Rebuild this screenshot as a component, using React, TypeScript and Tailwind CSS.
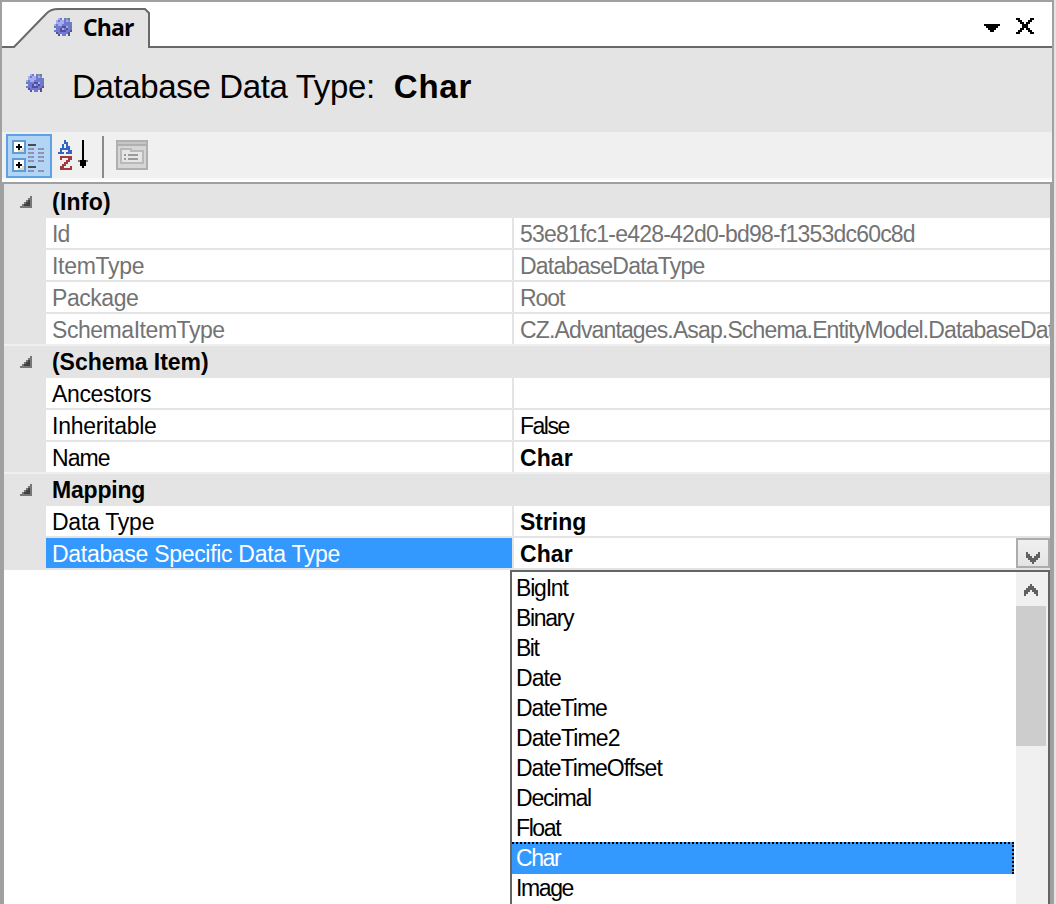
const gearRows = [
  '..ab.bgt.',
  '.abaabag.',
  '.aaaabbbb',
  'abaabbbbb',
  'tbbbddabt',
  '.bbdabdbb',
  'bbbdddbbd',
  '.dbbbbbd.',
  '..d.bb.d.',
];

const gearColors: Record<string, string> = {
  a: '#a3aeea',
  b: '#7377d2',
  g: '#8d919f',
  d: '#4f5099',
  t: '#3f9297',
};

function Gear() {
  return (
    <svg width="18" height="18" viewBox="0 0 9 9" shapeRendering="crispEdges" className="block shrink-0">
      {gearRows.flatMap((row, y) =>
        row.split('').map((c, x) =>
          c === '.' ? null : <rect key={`${x}-${y}`} x={x} y={y} width="1" height="1" fill={gearColors[c]} />,
        ),
      )}
    </svg>
  );
}

function TabStrip() {
  return (
    <div className="relative flex h-[46px] shrink-0 items-start bg-white">
      <svg width="1050" height="46" viewBox="2 2 1050 46" className="absolute left-0 top-0">
        <path d="M2 47H14L47 14Q51 9 58 9H145L149 13V47H1052V48H2Z" fill="#e4e4e4" />
        <path d="M2 47H14L47 13Q51 9 58 9H145L149 13V47H1052" fill="none" stroke="#696969" strokeWidth="2" />
      </svg>
      <div className="relative flex h-[46px] w-full items-start pl-[52px]">
        <div className="pt-4"><Gear /></div>
        <span className="ml-[11px] mt-[9px] font-['Open_Sans',sans-serif] text-[23px] font-bold leading-[32px] tracking-[-0.9px] text-black">Char</span>
        <svg width="60" height="24" viewBox="0 0 30 12" shapeRendering="crispEdges" className="ml-auto mr-[10px] mt-3">
          <path d="M1 5h8v1H8v1H7v1H6v1H4V8H3V7H2V6H1z" />
          <path d="M17 2h2v1h-2zM24 2h2v1h-2zM18 3h2v1h-2zM23 3h2v1h-2zM19 4h2v1h-2zM22 4h2v1h-2zM20 5h3v2h-3zM19 7h2v1h-2zM22 7h2v1h-2zM18 8h2v1h-2zM23 8h2v1h-2zM17 9h2v1h-2zM24 9h2v1h-2z" />
        </svg>
      </div>
    </div>
  );
}

function CategorizedIcon() {
  return (
    <svg width="32" height="32" viewBox="0 0 16 16" shapeRendering="crispEdges">
      {[0, 9].map((y) => (
        <g key={y} transform={`translate(0 ${y})`}>
          <path d="M0 0h7v7H0z" fill="#5e9bd8" />
          <path d="M1 1h5v5H1z" fill="#fff" />
          <path d="M5 4h1v2H3V5h2z" fill="#ded9bd" />
          <path d="M2 3h3v1H2zM3 2h1v3H3z" fill="#000" />
        </g>
      ))}
      <path d="M8 2h4v1H8zM8 13h4v1H8z" fill="#444d55" />
      <path d="M8 4h1v1H8zM8 6h1v1H8zM8 8h1v1H8zM8 10h1v1H8zM8 15h1v1H8zM13 4h1v1h-1zM13 6h1v1h-1zM13 8h1v1h-1zM13 10h1v1h-1zM13 15h1v1h-1zM10 4h1v1h-1zM10 6h1v1h-1zM10 8h1v1h-1zM10 10h1v1h-1zM10 15h1v1h-1zM15 4h1v1h-1zM15 6h1v1h-1zM15 8h1v1h-1zM15 10h1v1h-1zM15 15h1v1h-1z" fill="#9488bd" />
      <path d="M9 4h1v1H9zM9 6h1v1H9zM9 8h1v1H9zM9 10h1v1H9zM9 15h1v1H9zM14 4h1v1h-1zM14 6h1v1h-1zM14 8h1v1h-1zM14 10h1v1h-1zM14 15h1v1h-1z" fill="#7fa3ab" />
    </svg>
  );
}

function Toolbar() {
  return (
    <div className="flex h-[50px] shrink-0 items-start border-b-2 border-white bg-[#f0f0f0] pl-1 pt-0.5 shadow-[inset_0_-2px_0_#f5f9fe]">
      <div className="flex h-11 w-[46px] items-start border-2 border-[#5ea1e5] bg-[#b3d5f5] pl-1 pt-1">
        <CategorizedIcon />
      </div>
      <svg width="34" height="36" viewBox="0 0 17 18" shapeRendering="crispEdges" className="ml-1 mt-1">
        <path d="M4 1h1v1H4zM4 2h2v1H4zM3 3h1v1H3zM5 3h1v1H5zM3 4h1v1H3zM5 4h2v1H5zM2 5h5v1H2zM2 6h1v1H2zM6 6h2v1H6zM1 7h3v1H1zM5 7h3v1H5z" fill="#3565c4" />
        <path d="M2 9h6v1H2zM2 10h1v1H2zM6 10h2v1H6zM5 11h2v1H5zM4 12h2v1H4zM3 13h2v1H3zM2 14h2v1H2zM7 14h1v1H7zM2 15h6v1H2z" fill="#a03a3c" />
        <path d="M13 1h1v10h2v1h-1v2h-1v1h-1v-1h-1v-2h-1v-1h2z" />
        <path d="M11 11h1v1h-1zM15 11h1v1h-1z" fill="#777" />
      </svg>
      <div className="ml-3 mt-0.5 h-[42px] w-0.5 bg-[#8b8b8b]" />
      <svg width="32" height="30" viewBox="0 0 16 15" shapeRendering="crispEdges" className="ml-3 mt-1.5">
        <path d="M0 0h16v15H0z" fill="#b0b0b0" />
        <path d="M1 1h14v1H1z" fill="#c6c6c6" />
        <path d="M1 3h14v11H1z" fill="#d6d6d6" />
        <path d="M2 4h6v1h6v7H2z" fill="#b9b9b9" />
        <path d="M3 5h4v1h6v5H3z" fill="#e6e6e6" />
        <path d="M4 7h1v1H4zM6 7h5v1H6zM4 9h1v1H4zM6 9h5v1H6z" fill="#9a9a9a" />
      </svg>
    </div>
  );
}

function Category({ label, first, tracking }: { label: string; first?: boolean; tracking: string }) {
  return (
    <div className={`flex h-[34px] items-center border-t-2 bg-[#e4e4e4] ${first ? 'border-[#e4e4e4]' : 'border-[#efefef]'}`}>
      <svg width="12" height="12" viewBox="0 0 6 6" shapeRendering="crispEdges" className="ml-4">
        <path d="M5 0h1v6H0V5h1V4h1V3h1V2h1V1h1z" fill="#777" />
        <path d="M4 2h1v3H2V4h1V3h1z" fill="#404040" />
      </svg>
      <span className={`ml-5 whitespace-pre text-[23px] font-bold leading-[30px] text-black ${tracking}`}>{label}</span>
    </div>
  );
}

type RowProps = { name: string; value: string; nt: string; vt?: string; muted?: boolean; bold?: boolean; selected?: boolean; last?: boolean };

function Row({ name, value, nt, vt = '', muted, bold, selected, last }: RowProps) {
  const tone = muted ? 'text-[#737373]' : 'text-black';
  return (
    <div className={`flex bg-[#e4e4e4] pl-[42px] text-[23px] leading-[32px] ${last ? 'h-[30px]' : 'h-8'}`}>
      <div className={`h-[30px] w-[466px] whitespace-nowrap pl-1.5 ${nt} ${selected ? 'bg-[#3399ff] text-white' : `bg-white ${tone}`}`}>
        {name}
      </div>
      <div className="ml-0.5 flex h-[30px] min-w-0 flex-1 justify-between overflow-hidden bg-white">
        <span className={`whitespace-nowrap pl-1.5 ${tone} ${vt} ${bold ? 'font-bold' : ''}`}>{value}</span>
        {selected && (
          <span className="flex h-[30px] w-[34px] shrink-0 items-end justify-center border-2 border-[#acacac] bg-linear-to-b from-[#f0f0f0] to-[#e4e4e4] pb-0.5">
            <svg width="14" height="12" viewBox="0 0 7 6" shapeRendering="crispEdges">
              <path d="M0 0h1v1h1v1h1v1h1V2h1V1h1V0h1v3H6v1H5v1H4v1H3V5H2V4H1V3H0z" fill="#606060" />
            </svg>
          </span>
        )}
      </div>
    </div>
  );
}

const options = [
  ['BigInt', 'tracking-[-1.2px]'],
  ['Binary', 'tracking-[-1.35px]'],
  ['Bit', 'tracking-[-1.5px]'],
  ['Date', 'tracking-[-0.9px]'],
  ['DateTime', 'tracking-[-1px]'],
  ['DateTime2', 'tracking-[-0.9px]'],
  ['DateTimeOffset', 'tracking-[-1px]'],
  ['Decimal', 'tracking-[-1.15px]'],
  ['Float', 'tracking-[-1.4px]'],
  ['Char', 'tracking-[-1.4px]'],
  ['Image', 'tracking-[-1.4px]'],
];

function Dropdown() {
  return (
    <div className="absolute left-[506px] top-[386px] flex h-[336px] w-[540px] overflow-hidden border-2 border-b-0 border-[#646464] bg-white">
      <div className="w-[504px] shrink-0">
        {options.map(([label, tracking]) => (
          <div key={label} className={`relative h-[30px] w-[502px] whitespace-nowrap pl-1 text-[23px] leading-[32px] ${tracking} ${label === 'Char' ? 'text-white' : 'text-black'}`}>
            {label === 'Char' && <div className="absolute left-0 top-0 h-8 w-[502px] border-r-2 border-t-2 border-dotted border-black bg-[#3399ff]" />}
            <span className="relative">{label}</span>
          </div>
        ))}
      </div>
      <div className="flex flex-1 flex-col bg-[#f0f0f0]">
        <svg width="14" height="12" viewBox="0 0 7 6" shapeRendering="crispEdges" className="ml-2 mt-3">
          <path d="M0 6h1V5h1V4h1V3h1v1h1v1h1v1h1V3H6V2H5V1H4V0H3v1H2v1H1v1H0z" fill="#606060" />
        </svg>
        <div className="mt-2.5 h-[140px] w-[30px] bg-[#cdcdcd]" />
      </div>
    </div>
  );
}

export default function App() {
  return (
    <div className="h-[904px] w-[1056px] overflow-hidden bg-[#e4e4e4] font-['Liberation_Sans',sans-serif]">
      <div className="flex h-[904px] w-[1054px] flex-col border-2 border-b-0 border-[#a0a0a0]">
        <TabStrip />
        <header className="flex h-[84px] shrink-0 items-start bg-[#e4e4e4] pl-6">
          <div className="mt-[26px]"><Gear /></div>
          <h1 className="ml-[28px] mt-[19px] whitespace-pre text-[33px] leading-[40px] tracking-[-0.35px] text-black">Database Data Type:</h1>
          <strong className="ml-[19px] mt-[19px] text-[33px] leading-[40px] tracking-[0.8px] text-black">Char</strong>
        </header>
        <Toolbar />
        <main className="relative min-h-0 flex-1 border-2 border-b-0 border-[#a0a0a0] bg-white">
          <Category label="(Info)" first tracking="tracking-[0.25px]" />
          <Row muted name="Id" value="53e81fc1-e428-42d0-bd98-f1353dc60c8d" nt="tracking-[-0.9px]" vt="tracking-[-0.79px]" />
          <Row muted name="ItemType" value="DatabaseDataType" nt="tracking-[-0.3px]" vt="tracking-[-0.77px]" />
          <Row muted name="Package" value="Root" nt="tracking-[-0.45px]" vt="tracking-[-1.1px]" />
          <Row muted last name="SchemaItemType" value="CZ.Advantages.Asap.Schema.EntityModel.DatabaseDataType" nt="tracking-[-0.45px]" vt="tracking-[-0.86px]" />
          <Category label="(Schema Item)" tracking="tracking-[-0.05px]" />
          <Row name="Ancestors" value="" nt="tracking-[-0.35px]" />
          <Row name="Inheritable" value="False" nt="tracking-[-0.25px]" vt="tracking-[-1.5px]" />
          <Row last bold name="Name" value="Char" nt="tracking-[-0.9px]" vt="tracking-[0.1px]" />
          <Category label="Mapping" tracking="tracking-[-0.2px]" />
          <Row bold name="Data Type" value="String" nt="tracking-[-0.25px]" vt="tracking-[-0.05px]" />
          <Row bold selected name="Database Specific Data Type" value="Char" nt="tracking-[-0.3px]" vt="tracking-[0.1px]" />
          <Dropdown />
        </main>
      </div>
    </div>
  );
}
